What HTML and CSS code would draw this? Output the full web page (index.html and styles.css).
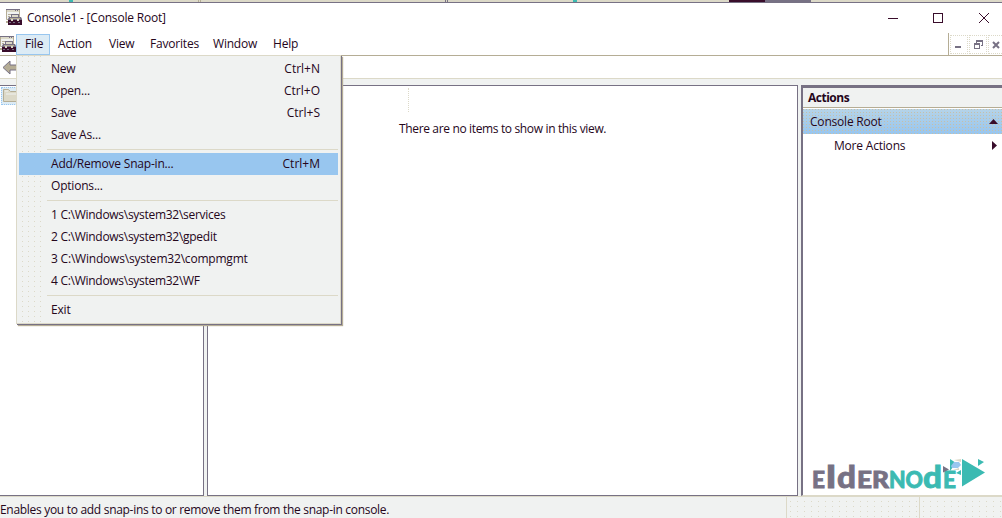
FILE: index.html
```html
<!DOCTYPE html>
<html lang="en">
<head>
<meta charset="utf-8">
<title>Console1 - [Console Root]</title>
<link rel="stylesheet" href="styles.css">
</head>
<body>
<svg width="0" height="0" class="defs">
  <symbol id="mmc" viewBox="0 0 16 16">
    <path d="M.5.5h13v10H.5z" fill="#f0f2f1" stroke="#b5ad95"/>
    <path d="M0 0h14v1H0z" fill="#777184"/>
    <path d="M1 1h12v2H1z" fill="#dcd9c8"/>
    <path d="M9 1h1v1H9zM11 1h1v1h-1z" fill="#777184"/>
    <path d="M2 5h3v1H2zM2 7h2v1H2zM0 12h2v2H0z" fill="#b5ad95"/>
    <path d="M5 8V5h8v3h2l1 2v6H2v-6l1-2z" fill="#777184"/>
    <path d="M6 6h6v2H6z" fill="#dcd9c8"/>
    <path d="M4 9h10v1H4z" fill="#b5ad95"/>
    <path d="M2 11h14v5H2z" fill="#390d2b"/>
    <path d="M5 10h2v2H5zM11 10h2v2h-2z" fill="#dcd9c8"/>
    <path d="M3 13h2v1H3zM7 13h2v1H7zM12 13h2v1h-2z" fill="#777184"/>
  </symbol>
</svg>
<div class="window">
  <div class="backdrop"><i class="teal a"></i><i class="divider b"></i><i class="divider c"></i><i class="teal d"></i><i class="dark"></i></div>
  <header class="titlebar">
    <svg class="app-icon" width="16" height="16"><use href="#mmc"/></svg>
    <span class="title">Console1 - [Console Root]</span>
    <svg class="controls" width="120" height="20" viewBox="882 7 120 20" shape-rendering="crispEdges">
      <path d="M888 17.5h10M933.5 12.5h9v9h-9z" fill="none" stroke="#390d2b"/>
      <path d="m979 12 10 10m0-10-10 10" fill="none" stroke="#390d2b"/>
    </svg>
  </header>
  <nav class="menubar">
    <svg class="doc-icon" width="16" height="16"><use href="#mmc"/></svg>
    <div class="menu-title open"><span>File</span></div>
    <span class="menu-title action">Action</span><span class="menu-title view">View</span><span class="menu-title favorites">Favorites</span><span class="menu-title win">Window</span><span class="menu-title help">Help</span>
    <div class="mdi">
      <div><svg width="16" height="17"><path d="M4 10h6v2H4z" fill="#777184"/></svg></div>
      <div><svg width="16" height="17" shape-rendering="crispEdges"><path d="M6 4h7v6h-2V9h1V6H7v1H6zM4 7h6v6H4zm1 2v3h4V9z" fill="#777184" fill-rule="evenodd"/></svg></div>
      <div><svg width="16" height="17"><path d="m4 6 6 6m0-6-6 6" fill="none" stroke="#777184" stroke-width="2"/></svg></div>
    </div>
  </nav>
  <div class="toolbar">
    <svg width="16" height="16"><path d="M1 7.500 8 1v4h8v5H8v4z" fill="#b5ad95" stroke="#777184"/></svg>
  </div>
  <main class="workspace">
    <aside class="tree"><div class="node"><svg width="16" height="15"><path d="M1.500 13.500v-12h5l2 2h7v10z" fill="#dcd9c8" stroke="#b5ad95"/><path d="M3 3h3M4 6h11" stroke="#f0f2f1"/></svg></div></aside>
    <section class="content"><div class="column-header"></div><p><span class="t">There are no items to show in this view.</span></p></section>
    <aside class="actions">
      <h2><span>Actions</span></h2>
      <div class="group"><span class="t">Console Root</span><svg width="10" height="6"><path d="m0 5 4.500-5L9 5z" fill="#390d2b"/></svg></div>
      <div class="more"><span class="t">More Actions</span><svg width="6" height="10"><path d="m0 0 5 4.500L0 9z" fill="#390d2b"/></svg></div>
      <svg class="logo" width="176" height="44" viewBox="811 450 176 44">
        <g class="brand dim"><text x="812" y="488" font-size="22" textLength="13" lengthAdjust="spacingAndGlyphs">E</text><text x="826" y="488" font-size="31" textLength="10" lengthAdjust="spacingAndGlyphs">l</text><text x="837" y="488" font-size="31" textLength="19" lengthAdjust="spacingAndGlyphs">d</text><text x="857" y="488" font-size="22" textLength="32" lengthAdjust="spacingAndGlyphs">ER</text></g>
        <g class="brand accent"><text x="889" y="488" font-size="22" textLength="34" lengthAdjust="spacingAndGlyphs">NO</text><text x="923" y="488" font-size="31" textLength="19" lengthAdjust="spacingAndGlyphs">d</text><text x="943" y="488" font-size="22" textLength="13" lengthAdjust="spacingAndGlyphs">E</text></g>
        <path d="m962 459 23 13.500-23 14zM978 459l6 3-6 4zM950 459l6 4-6 8zM956 473l5-3v5z" fill="#3bbab2"/>
        <path d="m943 466 6 3.500-6 3z" fill="#777184"/><path d="m951 466 3-4h5l2 3-3 3h-6z" fill="#98c6ef"/><path d="m954 460 7-1v3zM953 470l6-2v2z" fill="#dcd9c8"/>
      </svg>
    </aside>
  </main>
  <footer class="status"><span class="t">Enables you to add snap-ins to or remove them from the snap-in console.</span><i></i><i></i></footer>
</div>
<div class="dropdown">
  <div class="item"><span>New</span><kbd>Ctrl+N</kbd></div>
  <div class="item"><span>Open...</span><kbd>Ctrl+O</kbd></div>
  <div class="item"><span>Save</span><kbd>Ctrl+S</kbd></div>
  <div class="item"><span>Save As...</span></div>
  <hr>
  <div class="item selected"><span>Add/Remove Snap-in...</span><kbd>Ctrl+M</kbd></div>
  <div class="item"><span>Options...</span></div>
  <hr>
  <div class="item path"><span>1 C:\Windows\system32\services</span></div>
  <div class="item path"><span>2 C:\Windows\system32\gpedit</span></div>
  <div class="item"><span>3 C:\Windows\system32\compmgmt</span></div>
  <div class="item path"><span>4 C:\Windows\system32\WF</span></div>
  <hr>
  <div class="item"><span>Exit</span></div>
</div>
</body>
</html>
```
FILE: styles.css
```css
* { box-sizing: border-box; }
body { margin: 0; overflow: hidden; font: 12px/16px "Open Sans", "Noto Sans", sans-serif; letter-spacing: -0.2px; color: #25061b; background: #fff; }
svg { display: block; flex: none; }
.defs { position: absolute; }
.window { width: 1002px; height: 518px; display: flex; flex-direction: column; background: #fff; }
.backdrop { height: 3px; flex: none; display: flex; background: #dcd9c8; border-bottom: 1px solid #777184; }
.backdrop i { flex: none; height: 2px; }
.teal { width: 4px; background: #3bbab2; }
.a { margin-left: 69px; }
.divider { width: 3px; border: solid #b5ad95; border-width: 0 1px; }
.b { margin-left: 125px; }
.c { margin-left: 244px; border-color: #777184; }
.d { margin-left: 125px; }
.dark { width: 82px; margin-left: 152px; background: linear-gradient(90deg, #390d2b 36px, #777184 36px); }
.titlebar { height: 30px; flex: none; display: flex; align-items: center; padding-left: 6px; }
.app-icon { margin-top: -2px; }
.title { margin-left: 5px; }
.controls { margin-left: auto; }
.menubar { height: 23px; flex: none; display: flex; align-items: center; border-bottom: 1px solid #b5ad95; white-space: nowrap; }
.menu-title { flex: none; }
.menu-title.open { width: 34px; height: 21px; border: 1px solid #98c6ef; background: #dcebf5; display: flex; align-items: center; padding-left: 8px; }
.action { width: 51px; margin-left: 8px; }
.view { width: 41px; }
.favorites { width: 63px; }
.win { width: 60px; }
.mdi { align-self: stretch; margin-left: auto; width: 54px; flex: none; overflow: hidden; display: flex; gap: 1px; padding: 2px 0 0 1px; border-left: 1px solid #b5ad95; }
.mdi div { width: 18px; height: 19px; border: 1px dotted #dcd9c8; flex: none; }
.toolbar { height: 23px; flex: none; padding: 4px 0 0 2px; border-bottom: 1px solid #dcd9c8; }
.workspace { height: 417px; flex: none; display: flex; padding-top: 6px; background: #f0f2f1; }
.tree { width: 204px; height: 411px; border: 1px solid #777184; border-left: 0; background: #fff; padding: 1px; }
.node { width: 18px; height: 18px; border: 1px dotted #98c6ef; background: #dcebf5; }
.content { width: 591px; height: 411px; margin-left: 3px; border: 1px solid #777184; background: #fff; padding-top: 2px; }
.column-header { width: 201px; height: 24px; border-right: 1px dotted #dcd9c8; }
.content p { margin: 9px 0 0 191px; letter-spacing: -0.35px; }
.actions { width: 201px; height: 411px; margin-left: 3px; border: solid #777184; border-width: 3px 0 0 2px; border-bottom: 1px solid #dcd9c8; background: #fff; display: flex; flex-direction: column; }
.actions h2 { margin: 0; height: 20px; font-size: 12px; line-height: 19px; letter-spacing: -0.5px; padding-left: 5px; border-bottom: 1px solid #b5ad95; background: #f0f2f1; }
.group { height: 25px; margin-top: 1px; display: flex; align-items: center; justify-content: space-between; padding: 0 3px 0 7px; background: radial-gradient(circle at .5px .5px, #c6bfa9 .7px, transparent .8px) 0 0 / 3px 3px, linear-gradient(#b5d3e8, #98c6ef); }
.more { height: 24px; display: flex; align-items: center; justify-content: space-between; padding: 0 4px 0 31px; }
.logo { margin: auto 0 1px 8px; overflow: visible; }
.brand { font-family: Lato, sans-serif; font-weight: 900; letter-spacing: 0; stroke-width: .8px; }
.dim { fill: #777184; stroke: #777184; }
.accent { fill: #3bbab2; stroke: #3bbab2; }
.status { flex: 1; display: flex; align-items: flex-start; background: #f0f2f1; border-top: 1px solid #dcd9c8; line-height: 25px; white-space: nowrap; letter-spacing: -0.3px; }
.status .t { width: 786px; flex: none; }
.status i { width: 133px; flex: none; height: 21px; border-left: 1px solid #dcd9c8; background: radial-gradient(circle at .5px .5px, #dcd9c8 .6px, transparent .7px) 3px 4px / 7px 5px; }
.dropdown { position: absolute; left: 16px; top: 55px; width: 325px; height: 269px; padding: 2px; border: 1px solid #dcd9c8; background: linear-gradient(90deg, transparent 28px, #f0f2f1 28px), radial-gradient(circle at .5px .5px, #dcd9c8 .6px, transparent .7px) 5px 5px / 6px 5px, #f0f2f1; box-shadow: 1px 1px 0 #777184, 2px 2px 1px #b5ad95; }
.item { height: 22px; display: flex; align-items: center; justify-content: space-between; padding: 0 18px 0 32px; }
.item.selected { background: #98c6ef; }
.item.path { letter-spacing: -0.28px; }
.item kbd { font: inherit; letter-spacing: 0; }
.dropdown hr { margin: 3px 0 3px 28px; height: 1px; border: 0; background: #dcd9c8; }
```
